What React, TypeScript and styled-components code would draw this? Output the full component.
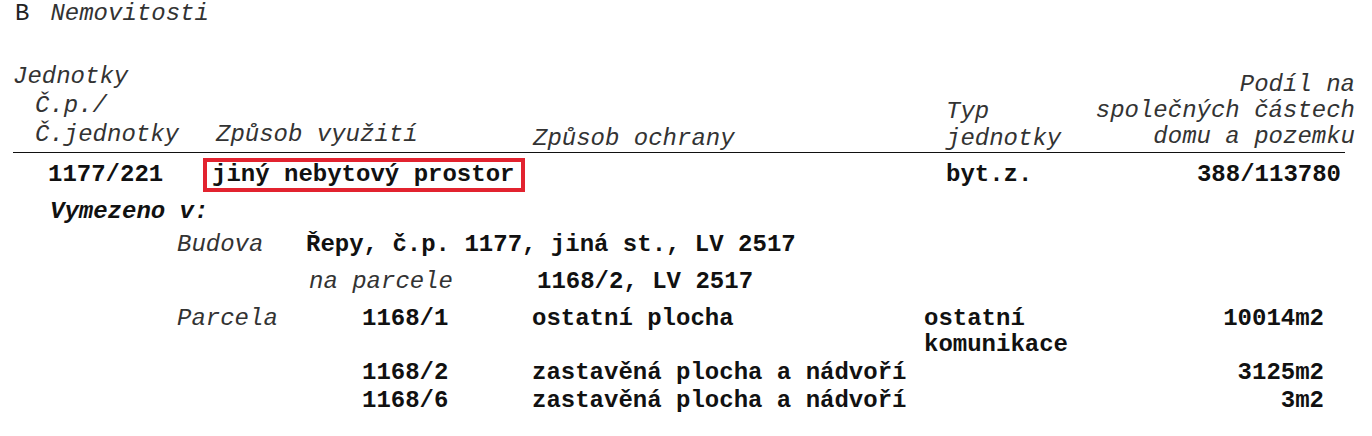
import styled, { createGlobalStyle } from 'styled-components';

const GlobalStyle = createGlobalStyle`
    html, body {
        margin: 0;
        padding: 0;
        background: #fff;
    }
    body {
        font-family: "Liberation Mono", "Courier New", "DejaVu Sans Mono", monospace;
        font-size: 24px;
        line-height: 26px;
        color: #111;
    }
`

interface AlignI {
    right?: boolean;
    pad?: number;
    lh?: number;
    bottom?: number;
}

const Page = styled.div`
    width: 1372px;
    height: 436px;
    padding: 1px 0 0 13px;
    box-sizing: border-box;
    overflow: hidden;
`

const SectionTitle = styled.div`
    display: flex;
    gap: 21px;
    padding-left: 2px;
`

const Letter = styled.span`
    font-style: normal;
    color: #222;
`

const Italic = styled.span`
    font-style: italic;
    color: #333;
`

//HEADER
const UnitTable = styled.div`
    width: 1332px;
    margin-top: 35px;
`

const HeaderRow = styled.div`
    display: grid;
    grid-template-columns: 190px 330px 413px 1fr auto;
    align-items: end;
    border-bottom: 1px solid #111;
`

const HeadCell = styled.div<AlignI>`
    font-style: italic;
    color: #333;
    white-space: pre;
    text-align: ${(element: AlignI) => element.right ? 'right' : 'left'};
    padding-left: ${(element: AlignI) => element.pad || 0}px;
    padding-bottom: ${(element: AlignI) => element.bottom || 0}px;
    line-height: ${(element: AlignI) => element.lh || 26}px;
    margin-right: ${(element: AlignI) => element.right ? '-10px' : '0'};
`

const Indent = styled.div`
    padding-left: 22px;
`

//BODY
const DataRow = styled.div`
    display: grid;
    grid-template-columns: 190px 330px 413px 1fr auto;
    align-items: center;
    margin-top: 5px;
    font-weight: bold;
`

const DataCell = styled.div<AlignI>`
    padding-left: ${(element: AlignI) => element.pad || 0}px;
    text-align: ${(element: AlignI) => element.right ? 'right' : 'left'};
    margin-right: ${(element: AlignI) => element.right ? '4px' : '0'};
`

const Highlight = styled.span`
    display: inline-block;
    border: 4px solid #e2232f;
    padding: 0 7px 0 5px;
`

const Defined = styled.div`
    margin-top: 7px;
    padding-left: 37px;
    font-weight: bold;
    font-style: italic;
`

const Building = styled.div`
    display: grid;
    grid-template-columns: 129px 1fr;
    margin-top: 7px;
    margin-left: 164px;
    row-gap: 11px;
`

const Label = styled.div<AlignI>`
    font-style: italic;
    color: #333;
    padding-left: ${(element: AlignI) => element.pad || 0}px;
`

const Value = styled.div<AlignI>`
    font-weight: bold;
    white-space: pre;
    padding-left: ${(element: AlignI) => element.pad || 0}px;
    text-align: ${(element: AlignI) => element.right ? 'right' : 'left'};
`

const SubRow = styled.div`
    display: grid;
    grid-template-columns: 231px 1fr;
`

const ParcelGrid = styled.div`
    display: grid;
    grid-template-columns: 185px 170px 392px 1fr auto;
    width: 1147px;
    margin-left: 164px;
    margin-top: 11px;
    row-gap: 2px;
`

interface ParcelI {
    label?: string;
    number: string;
    use: string;
    kind?: string;
    area: string;
}

const parcels: ParcelI[] = [
    { label: 'Parcela', number: '1168/1', use: 'ostatní plocha', kind: 'ostatní\nkomunikace', area: '10014m2' },
    { number: '1168/2', use: 'zastavěná plocha a nádvoří', area: '3125m2' },
    { number: '1168/6', use: 'zastavěná plocha a nádvoří', area: '3m2' },
]

export default function App() {
    return (
        <Page>
            <GlobalStyle />
            <SectionTitle>
                <Letter>B</Letter>
                <Italic>Nemovitosti</Italic>
            </SectionTitle>

            <UnitTable>
                <HeaderRow>
                    <HeadCell lh={29} bottom={3}>
                        <div>Jednotky</div>
                        <Indent>Č.p./</Indent>
                        <Indent>Č.jednotky</Indent>
                    </HeadCell>
                    <HeadCell pad={13} bottom={4}>Způsob využití</HeadCell>
                    <HeadCell>Způsob ochrany</HeadCell>
                    <HeadCell lh={27}>{'Typ\njednotky'}</HeadCell>
                    <HeadCell right bottom={2}>{'Podíl na\nspolečných částech\ndomu a pozemku'}</HeadCell>
                </HeaderRow>

                <DataRow>
                    <DataCell pad={35}>1177/221</DataCell>
                    <DataCell>
                        <Highlight>jiný nebytový prostor</Highlight>
                    </DataCell>
                    <DataCell />
                    <DataCell>byt.z.</DataCell>
                    <DataCell right>388/113780</DataCell>
                </DataRow>
            </UnitTable>

            <Defined>Vymezeno v:</Defined>

            <Building>
                <Label>Budova</Label>
                <Value>Řepy, č.p. 1177, jiná st., LV 2517</Value>
                <div />
                <SubRow>
                    <Label pad={3}>na parcele</Label>
                    <Value>1168/2, LV 2517</Value>
                </SubRow>
            </Building>

            <ParcelGrid>
                {parcels.map((p) => (
                    <>
                        <Label key={p.number + 'l'}>{p.label || ''}</Label>
                        <Value>{p.number}</Value>
                        <Value>{p.use}</Value>
                        <Value>{p.kind || ''}</Value>
                        <Value right>{p.area}</Value>
                    </>
                ))}
            </ParcelGrid>
        </Page>
    );
}
